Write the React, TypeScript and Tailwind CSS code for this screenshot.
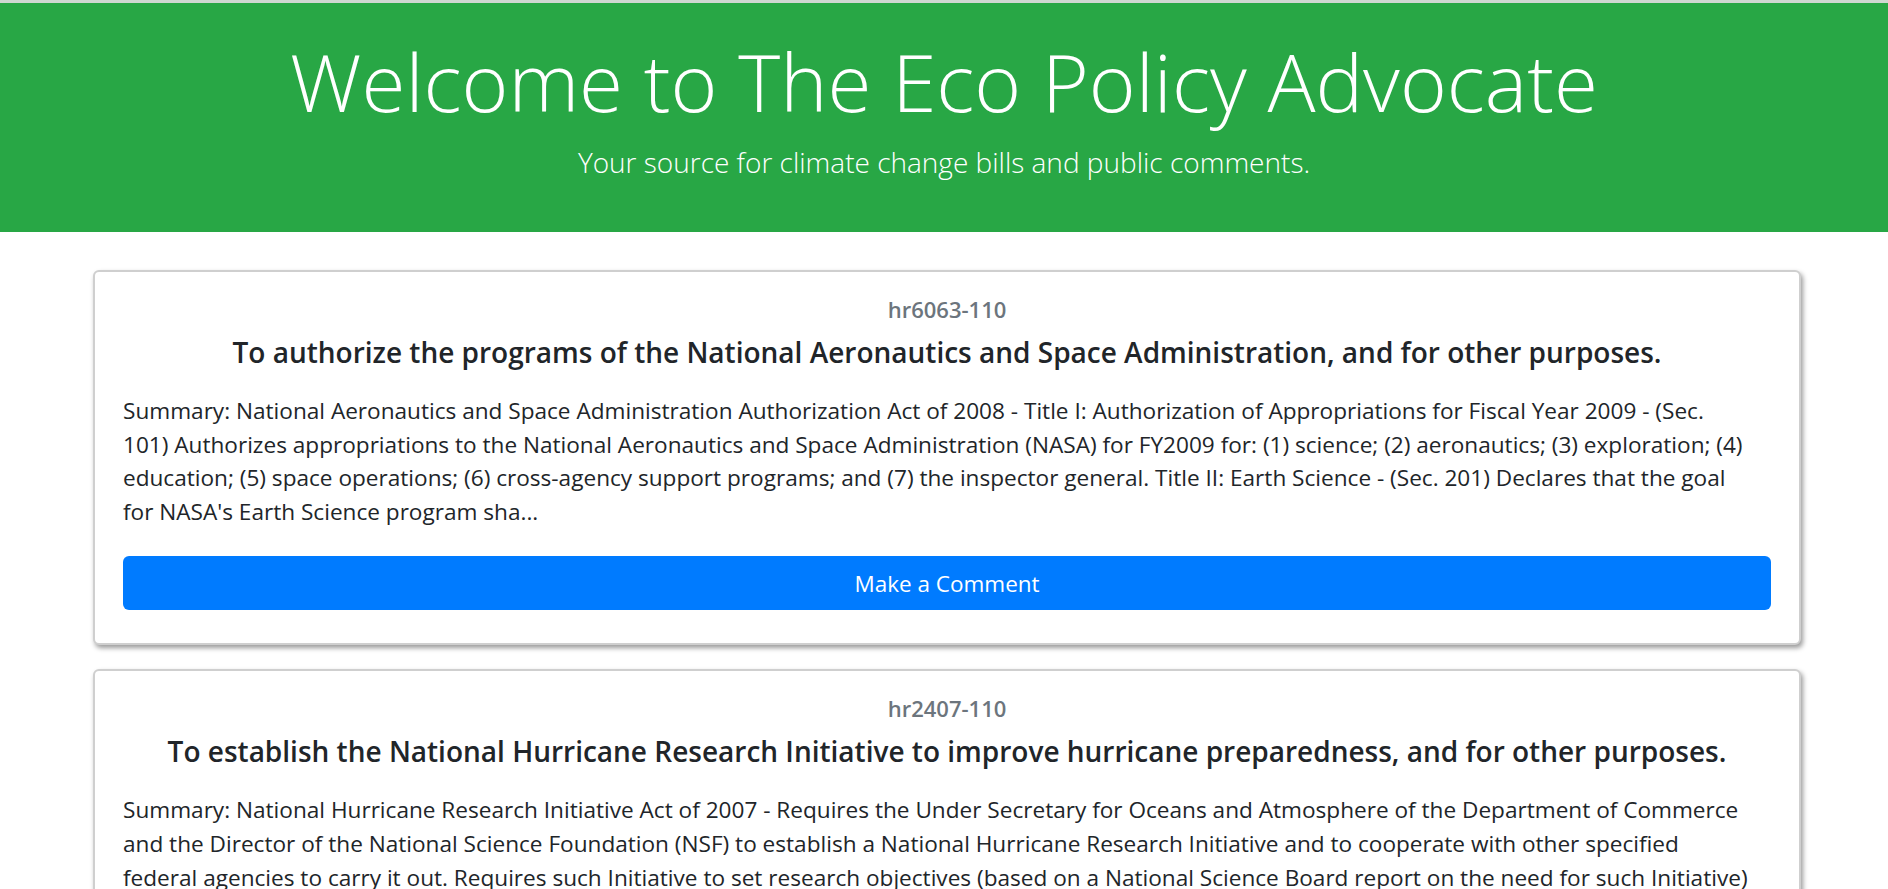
import React from 'react';

type Bill = {
  id: string;
  title: string;
  summary: string[];
};

// summary lines are kept as in the source layout
const bills: Bill[] = [
  {
    id: 'hr6063-110',
    title:
      'To authorize the programs of the National Aeronautics and Space Administration, and for other purposes.',
    summary: [
      'Summary: National Aeronautics and Space Administration Authorization Act of 2008 - Title I: Authorization of Appropriations for Fiscal Year 2009 - (Sec.',
      '101) Authorizes appropriations to the National Aeronautics and Space Administration (NASA) for FY2009 for: (1) science; (2) aeronautics; (3) exploration; (4)',
      'education; (5) space operations; (6) cross-agency support programs; and (7) the inspector general. Title II: Earth Science - (Sec. 201) Declares that the goal',
      "for NASA's Earth Science program sha...",
    ],
  },
  {
    id: 'hr2407-110',
    title:
      'To establish the National Hurricane Research Initiative to improve hurricane preparedness, and for other purposes.',
    summary: [
      'Summary: National Hurricane Research Initiative Act of 2007 - Requires the Under Secretary for Oceans and Atmosphere of the Department of Commerce',
      'and the Director of the National Science Foundation (NSF) to establish a National Hurricane Research Initiative and to cooperate with other specified',
      'federal agencies to carry it out. Requires such Initiative to set research objectives (based on a National Science Board report on the need for such Initiative)',
      'and to develop a research plan...',
    ],
  },
];

const BillCard: React.FC<{ bill: Bill }> = ({ bill }) => (
  <div className="bg-white border-2 border-[#cfcfcf] rounded-[6px] shadow-[2px_3px_5px_rgba(0,0,0,0.4)] px-[28px] pt-[24px] pb-[33px]">
    <h6 className="text-center text-[#6c757d] font-semibold text-[22px] leading-[27px]">{bill.id}</h6>
    <h5 className="text-center text-[#212529] font-semibold text-[28px] leading-[34px] mt-[12px]">{bill.title}</h5>
    <p className="text-[#212529] text-[22.6px] leading-[33.6px] mt-[25px]">
      {bill.summary.map((line, i) => (
        <span key={i} className="block whitespace-nowrap">
          {line}
        </span>
      ))}
    </p>
    <button className="w-full mt-[28px] h-[54px] rounded-[6px] bg-[#007bff] text-white text-[22.5px]">
      Make a Comment
    </button>
  </div>
);

export default function App() {
  return (
    <div className="min-h-screen bg-white font-['Open_Sans',sans-serif]">
      <div className="h-[3px] bg-[#cfd8d1]" />
      <header className="bg-[#28a745] text-white text-center h-[229px] pt-[28px]">
        <h1 className="text-[80px] leading-[100px] font-light">Welcome to The Eco Policy Advocate</h1>
        <p className="text-[28px] leading-[40px] font-light mt-[11px]">
          Your source for climate change bills and public comments.
        </p>
      </header>
      <main className="ml-[93px] mr-[87px] mt-[38px] flex flex-col gap-[24px] pb-[40px]">
        {bills.map((b) => (
          <BillCard key={b.id} bill={b} />
        ))}
      </main>
    </div>
  );
}
